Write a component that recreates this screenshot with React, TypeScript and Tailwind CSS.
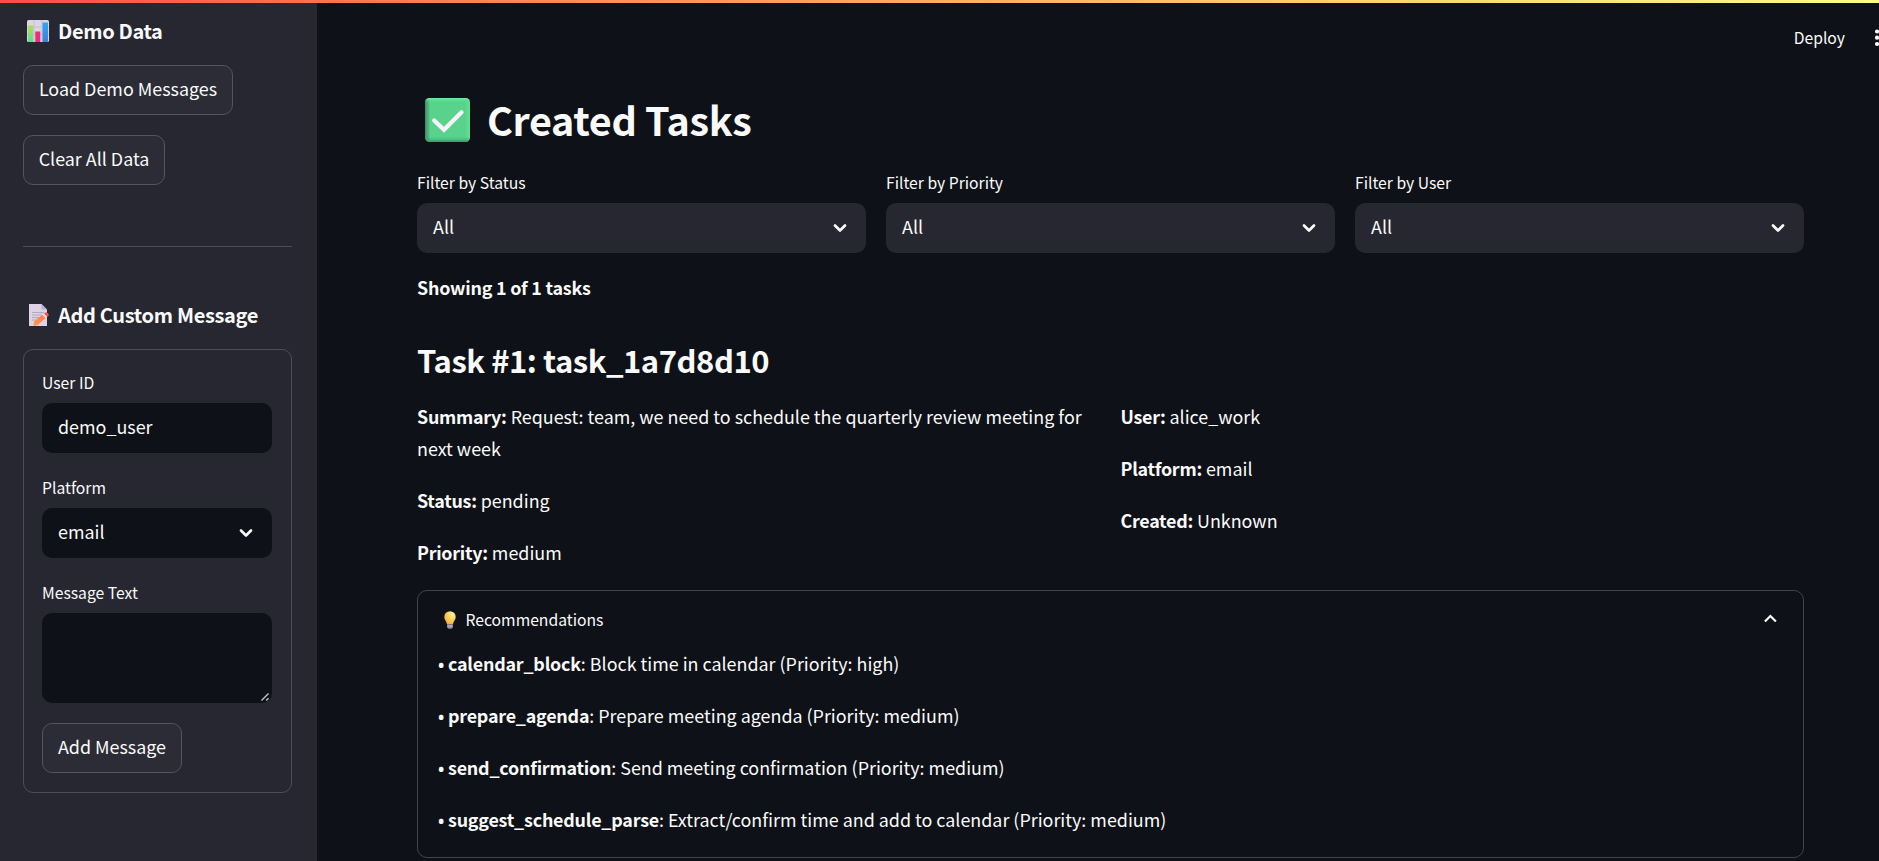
import React from "react";

function ChevronDown() {
  return (
    <svg width="14" height="10" viewBox="0 0 14 10" fill="none" className="shrink-0">
      <path d="M2 2.500l5 5 5-5" stroke="#fafafa" strokeWidth="2.700" strokeLinecap="round" strokeLinejoin="round" />
    </svg>
  );
}

function ChartEmoji() {
  return (
    <svg width="22" height="22" viewBox="0 0 22 22" className="shrink-0">
      <defs>
        <linearGradient id="green" x1="0" y1="0" x2="0" y2="1">
          <stop offset="0" stopColor="#b5dc55" />
          <stop offset="1" stopColor="#5be08f" />
        </linearGradient>
        <linearGradient id="blue" x1="0" y1="0" x2="0" y2="1">
          <stop offset="0" stopColor="#2fa8f0" />
          <stop offset="1" stopColor="#3f7ed8" />
        </linearGradient>
      </defs>
      <rect width="22" height="22" rx="1.6" fill="#dcd5e3" />
      <path d="M7 0v22M15 0v22M0 7h22M0 14.500h22" stroke="#c6bdd0" strokeWidth="1" />
      <path d="M1 5.500h5.200V22H2a1 1 0 0 1-1-1z" fill="url(#green)" />
      <path d="M8.300 11.500h5V22h-5z" fill="#ea2f78" />
      <path d="M15.500 2.500H21V21a1 1 0 0 1-1 1h-4.500z" fill="url(#blue)" />
    </svg>
  );
}

function MemoEmoji() {
  return (
    <svg width="20" height="22" viewBox="0 0 20 22" className="shrink-0">
      <defs>
        <linearGradient id="pencil" x1="1" y1="0" x2="0" y2="1">
          <stop offset="0" stopColor="#ff7a50" />
          <stop offset="1" stopColor="#ff9a4a" />
        </linearGradient>
      </defs>
      <path d="M0 0h12.500L18 5.500V22H0z" fill="#ddd3e6" />
      <path d="M12.500 0L18 5.500h-5.500z" fill="#b9aec4" />
      <path d="M3 8.500h12M3 11h10M3 13.500h8M3 16h4" stroke="#b3a9bd" strokeWidth="1" />
      <path d="M4.300 21.700l1-4.700 8-6.300 3.400 3.400-8.200 7.100z" fill="url(#pencil)" />
      <path d="M13.300 10.700l1.700-1.300 3.300 3.300-1.600 1.400z" fill="#efe3ea" />
      <path d="M15 9.400l1.500-1c1-.6 3.500 1.700 3.400 2.900L18.300 12.700z" fill="#f4554a" />
    </svg>
  );
}

function CheckEmoji() {
  return (
    <svg width="45" height="44" viewBox="0 0 45 44" className="shrink-0">
      <defs>
        <linearGradient id="edgeX" x1="0" y1="0" x2="1" y2="0">
          <stop offset="0" stopColor="#3c8a63" />
          <stop offset="0.12" stopColor="#59d38c" />
          <stop offset="0.9" stopColor="#59d38c" />
          <stop offset="1" stopColor="#62e398" />
        </linearGradient>
        <linearGradient id="edgeY" x1="0" y1="0" x2="0" y2="1">
          <stop offset="0" stopColor="#6bf5a4" stopOpacity="0.9" />
          <stop offset="0.12" stopColor="#59d38c" stopOpacity="0" />
          <stop offset="0.88" stopColor="#4bb27b" stopOpacity="0" />
          <stop offset="1" stopColor="#3c8a63" stopOpacity="0.9" />
        </linearGradient>
      </defs>
      <rect width="45" height="44" rx="4.500" fill="url(#edgeX)" />
      <rect width="45" height="44" rx="4.500" fill="url(#edgeY)" />
      <path d="M9.200 22.500l9.800 9.300 17.500-17.600" fill="none" stroke="#f9f1fb" strokeWidth="4.200" strokeLinecap="round" strokeLinejoin="miter" />
    </svg>
  );
}

function BulbEmoji() {
  return (
    <svg width="12" height="18" viewBox="0 0 12 18" className="mt-px shrink-0">
      <defs>
        <radialGradient id="glow" cx="0.7" cy="0.25" r="0.8">
          <stop offset="0" stopColor="#fff0a8" />
          <stop offset="0.5" stopColor="#ffd05c" />
          <stop offset="1" stopColor="#f3ab3c" />
        </radialGradient>
      </defs>
      <path d="M6 .2a5.700 5.700 0 0 1 5.700 5.700c0 3-2.200 3.900-2.700 7.600H3C2.500 9.800.3 8.900.3 5.900A5.700 5.700 0 0 1 6 .2z" fill="url(#glow)" />
      <path d="M3.200 13.500h5.600v2.800L7.500 17.800h-3l-1.300-1.500z" fill="#9a86ad" />
      <path d="M3.200 15h5.600" stroke="#d6c6e0" strokeWidth="0.8" />
    </svg>
  );
}

function SidebarButton({ children, width }: { children: React.ReactNode; width: string }) {
  return (
    <button className={`h-[50px] rounded-[10px] border border-[#53545c] bg-[#2b2c36] pb-[5px] text-center ${width}`}>
      {children}
    </button>
  );
}

function Filter({ label }: { label: string }) {
  return (
    <div className="flex-1">
      <div className="h-[40px] pt-[7px] text-[15.700px] leading-[26px]">{label}</div>
      <div className="flex h-[50px] items-center justify-between rounded-[10px] bg-[#262730] pl-4 pr-[19px]">
        <span className="pb-[4px]">All</span>
        <ChevronDown />
      </div>
    </div>
  );
}

const recommendations = [
  ["calendar_block", "Block time in calendar (Priority: high)"],
  ["prepare_agenda", "Prepare meeting agenda (Priority: medium)"],
  ["send_confirmation", "Send meeting confirmation (Priority: medium)"],
  ["suggest_schedule_parse", "Extract/confirm time and add to calendar (Priority: medium)"],
];

function Field({ name, value }: { name: string; value: string }) {
  return (
    <p>
      <strong className="font-bold tracking-[-0.270px]">{name}:</strong> {value}
    </p>
  );
}

export default function App() {
  return (
    <div className="flex h-[861px] w-[1879px] flex-col overflow-hidden bg-[#0e1117] font-['Noto_Sans_CJK_SC',sans-serif] text-[17.900px] leading-[32px] text-[#fafafa]">
      <div className="h-[3px] shrink-0 bg-linear-to-r from-[#ff4b4b] to-[#fffd80]" />
      <div className="flex min-h-0 flex-1">
        <aside className="w-[317px] shrink-0 bg-[#262730] pl-[23px] pr-[25px]">
          <h3 className="flex h-[62px] items-center gap-[9px] pb-[6px] pl-1 text-[20px] font-bold tracking-[-0.350px]">
            <ChartEmoji />
            Demo Data
          </h3>
          <div className="flex flex-col items-start gap-5">
            <SidebarButton width="w-[210px]">Load Demo Messages</SidebarButton>
            <SidebarButton width="w-[142px]">Clear All Data</SidebarButton>
          </div>
          <hr className="mt-[61px] border-[#4c4d55]" />
          <h3 className="mt-[52px] flex h-[32px] items-center gap-[9px] pl-[6px] text-[20px] font-bold tracking-[-0.330px]">
            <MemoEmoji />
            Add Custom Message
          </h3>
          <form className="mt-[18px] h-[444px] rounded-[10px] border border-[#4c4d55] pl-[18px] pr-[19px] pt-[19px]">
            <div className="h-[34px] text-[15.700px] leading-[28px]">User ID</div>
            <div className="flex h-[50px] items-center rounded-[10px] bg-[#0e1117] px-4 pb-[4px]">demo_user</div>
            <div className="mt-[21px] h-[34px] text-[15.700px] leading-[28px]">Platform</div>
            <div className="flex h-[50px] items-center justify-between rounded-[10px] bg-[#0e1117] pl-4 pr-[19px]">
              <span className="pb-[4px]">email</span>
              <ChevronDown />
            </div>
            <div className="mt-[21px] h-[34px] text-[15.700px] leading-[28px]">Message Text</div>
            <div className="flex h-[90px] items-end justify-end rounded-[10px] bg-[#0e1117] pb-[1px] pr-[2px]">
              <svg width="10" height="10" viewBox="0 0 10 10">
                <path d="M1.500 8.500l7-7M6.200 8.500l2.300-2.300" stroke="#c4c4c6" strokeWidth="1.400" />
              </svg>
            </div>
            <div className="mt-5">
              <SidebarButton width="w-[140px]">Add Message</SidebarButton>
            </div>
          </form>
        </aside>
        <main className="flex min-w-0 flex-1 flex-col pl-[100px]">
          <header className="flex h-[70px] shrink-0 items-center justify-end text-[15.700px]">
            <span>Deploy</span>
            <svg width="34" height="20" viewBox="0 0 34 20">
              <circle cx="32" cy="3.500" r="2.100" fill="#fafafa" />
              <circle cx="32" cy="9.700" r="2.100" fill="#fafafa" />
              <circle cx="32" cy="16" r="2.100" fill="#fafafa" />
            </svg>
          </header>
          <div className="w-[1387px]">
            <h1 className="flex h-[90px] items-center gap-[17px] pl-2 pt-[4px] text-[39.500px] font-bold tracking-[-0.350px]">
              <CheckEmoji />
              <span className="pb-[3px]">Created Tasks</span>
            </h1>
            <div className="flex gap-5">
              <Filter label="Filter by Status" />
              <Filter label="Filter by Priority" />
              <Filter label="Filter by User" />
            </div>
            <p className="mt-[18px] font-bold tracking-[-0.220px]">Showing 1 of 1 tasks</p>
            <h2 className="mt-[37px] h-[40px] text-[31px] font-bold leading-[40px] tracking-[-0.460px]">Task #1: task_1a7d8d10</h2>
            <div className="mt-[20px] flex gap-5">
              <div className="flex-1 space-y-5">
                <Field name="Summary" value="Request: team, we need to schedule the quarterly review meeting for next week" />
                <Field name="Status" value="pending" />
                <Field name="Priority" value="medium" />
              </div>
              <div className="flex-1 space-y-5">
                <Field name="User" value="alice_work" />
                <Field name="Platform" value="email" />
                <Field name="Created" value="Unknown" />
              </div>
            </div>
            <section className="mt-[22px] h-[268px] rounded-[10px] border border-[#41444c]">
              <div className="flex h-[56px] items-center gap-[9.500px] pl-[26px] pr-[26px] text-[15.700px]">
                <BulbEmoji />
                <span className="flex-1 pt-[2px]">Recommendations</span>
                <svg width="14" height="10" viewBox="0 0 14 10" fill="none">
                  <path d="M1.900 7.500L7.400 2l5.500 5.500" stroke="#fafafa" strokeWidth="2.200" />
                </svg>
              </div>
              <div className="space-y-5 pl-5">
                {recommendations.map(([name, text]) => (
                  <p key={name} className="h-[32px]">
                    <span className="relative -left-px top-[2px] inline-block w-[6px] font-['Open_Sans',sans-serif] text-[22px] leading-none">•</span>{" "}
                    <strong className="font-bold tracking-[-0.220px]">{name}</strong>: {text}
                  </p>
                ))}
              </div>
            </section>
          </div>
        </main>
      </div>
    </div>
  );
}
